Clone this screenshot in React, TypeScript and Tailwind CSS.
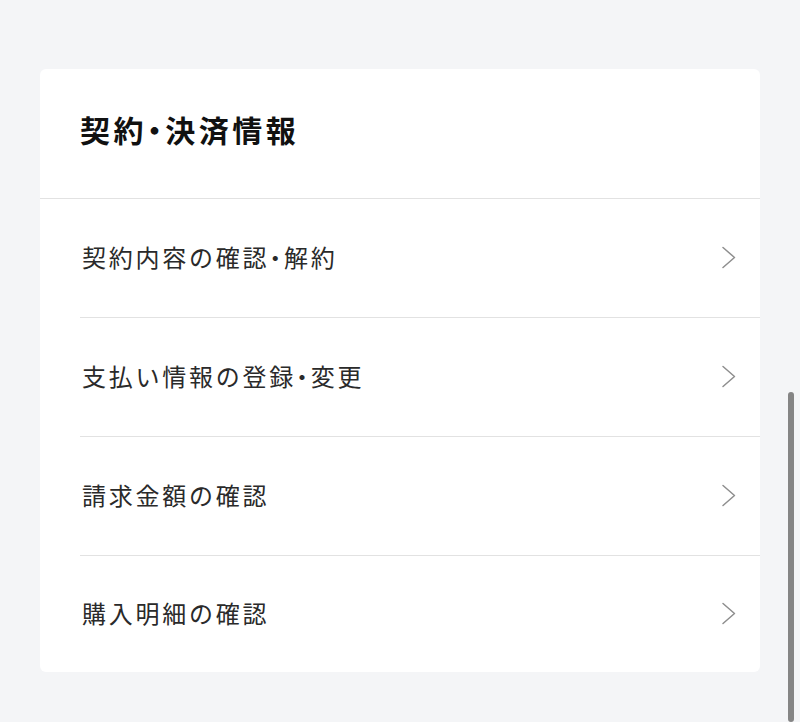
const ITEMS = [
  '契約内容の確認・解約',
  '支払い情報の登録・変更',
  '請求金額の確認',
  '購入明細の確認',
];

// the middle dot is set half-width, as in the reference
function Label({ text }: { text: string }) {
  const parts = text.split('・');
  return (
    <>
      {parts.map((p, i) => (
        <span key={i}>
          {i > 0 && <span className="[font-feature-settings:'halt']">・</span>}
          {p}
        </span>
      ))}
    </>
  );
}

function Chevron() {
  return (
    <svg width="15" height="23" viewBox="0 0 15 23" fill="none" aria-hidden="true">
      <polyline
        points="2,1.5 13.5,11.5 2,21.5"
        stroke="#8e8e8e"
        strokeWidth="1.5"
        strokeLinecap="round"
        strokeLinejoin="round"
      />
    </svg>
  );
}

export default function App() {
  return (
    <div
      className="relative min-h-screen w-full overflow-hidden bg-[#f4f5f7] px-10 pt-[69px] pb-12"
      style={{ fontFamily: '"Noto Sans CJK JP", "Noto Sans", sans-serif' }}
    >
      <section className="w-[720px] overflow-hidden rounded-md bg-white">
        <div className="flex h-[130px] items-center border-b border-[#e2e2e2] px-10 pb-[10px]">
          <h2 className="text-[30px] font-bold leading-none tracking-[0.115em] text-[#111]">
            <Label text="契約・決済情報" />
          </h2>
        </div>

        <ul>
          {ITEMS.map((label, i) => (
            <li
              key={label}
              className={
                i < ITEMS.length - 1
                  ? 'ml-10 flex h-[119px] items-center justify-between border-b border-[#e2e2e2] pr-6 pb-[2px]'
                  : 'ml-10 flex h-[116px] items-center justify-between pr-6 pb-[2px]'
              }
            >
              <span className="pl-[2px] text-[24px] leading-none tracking-[0.115em] text-[#2a2a2a]">
                <Label text={label} />
              </span>
              <Chevron />
            </li>
          ))}
        </ul>
      </section>

      <div className="absolute right-[6px] top-[392px] h-[330px] w-[6px] rounded-full bg-[#858585]" />
    </div>
  );
}
